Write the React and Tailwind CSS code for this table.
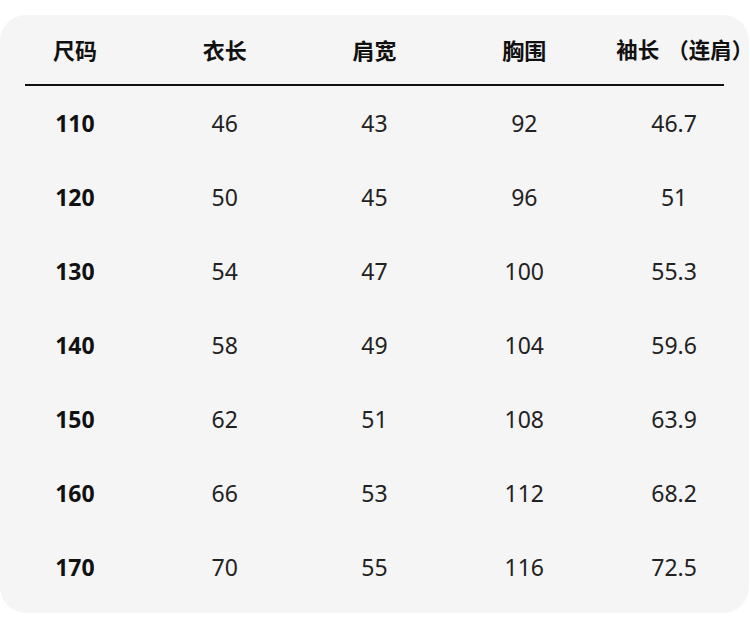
const headers = ["尺码", "衣长", "肩宽", "胸围"];

const rows = [
  ["110", "46", "43", "92", "46.7"],
  ["120", "50", "45", "96", "51"],
  ["130", "54", "47", "100", "55.3"],
  ["140", "58", "49", "104", "59.6"],
  ["150", "62", "51", "108", "63.9"],
  ["160", "66", "53", "112", "68.2"],
  ["170", "70", "55", "116", "72.5"],
];

const cjk = { fontFamily: '"Noto Sans CJK SC", sans-serif' };

export default function App() {
  return (
    <div className="w-[750px] h-[629px] bg-white pt-[15px]">
      <div
        className="w-[749px] h-[598px] bg-[#f5f5f5] rounded-[26px] text-[#1a1a1a]"
        style={{ fontFamily: '"Noto Sans", "Noto Sans CJK SC", sans-serif' }}
      >
        <div className="grid grid-cols-5 h-[69px] items-center">
          {headers.map((h) => (
            <div
              key={h}
              className="text-center text-[22px] font-bold text-[#111]"
              style={cjk}
            >
              {h}
            </div>
          ))}
          <div
            className="text-left text-[21.5px] font-bold text-[#111] pl-[17px] whitespace-nowrap"
            style={cjk}
          >
            袖长<span className="ml-[8px]">（连肩</span>
            <span className="inline-block w-[12px]">）</span>
          </div>
        </div>
        <div className="mx-[25px] h-[2px] bg-[#111]" />
        {rows.map((r) => (
          <div key={r[0]} className="grid grid-cols-5 h-[74px] items-center">
            {r.map((v, i) => (
              <div
                key={i}
                className={
                  i === 0
                    ? "text-center text-[23px] font-bold text-[#111]"
                    : "text-center text-[23px] text-[#222]"
                }
              >
                {v}
              </div>
            ))}
          </div>
        ))}
      </div>
    </div>
  );
}
